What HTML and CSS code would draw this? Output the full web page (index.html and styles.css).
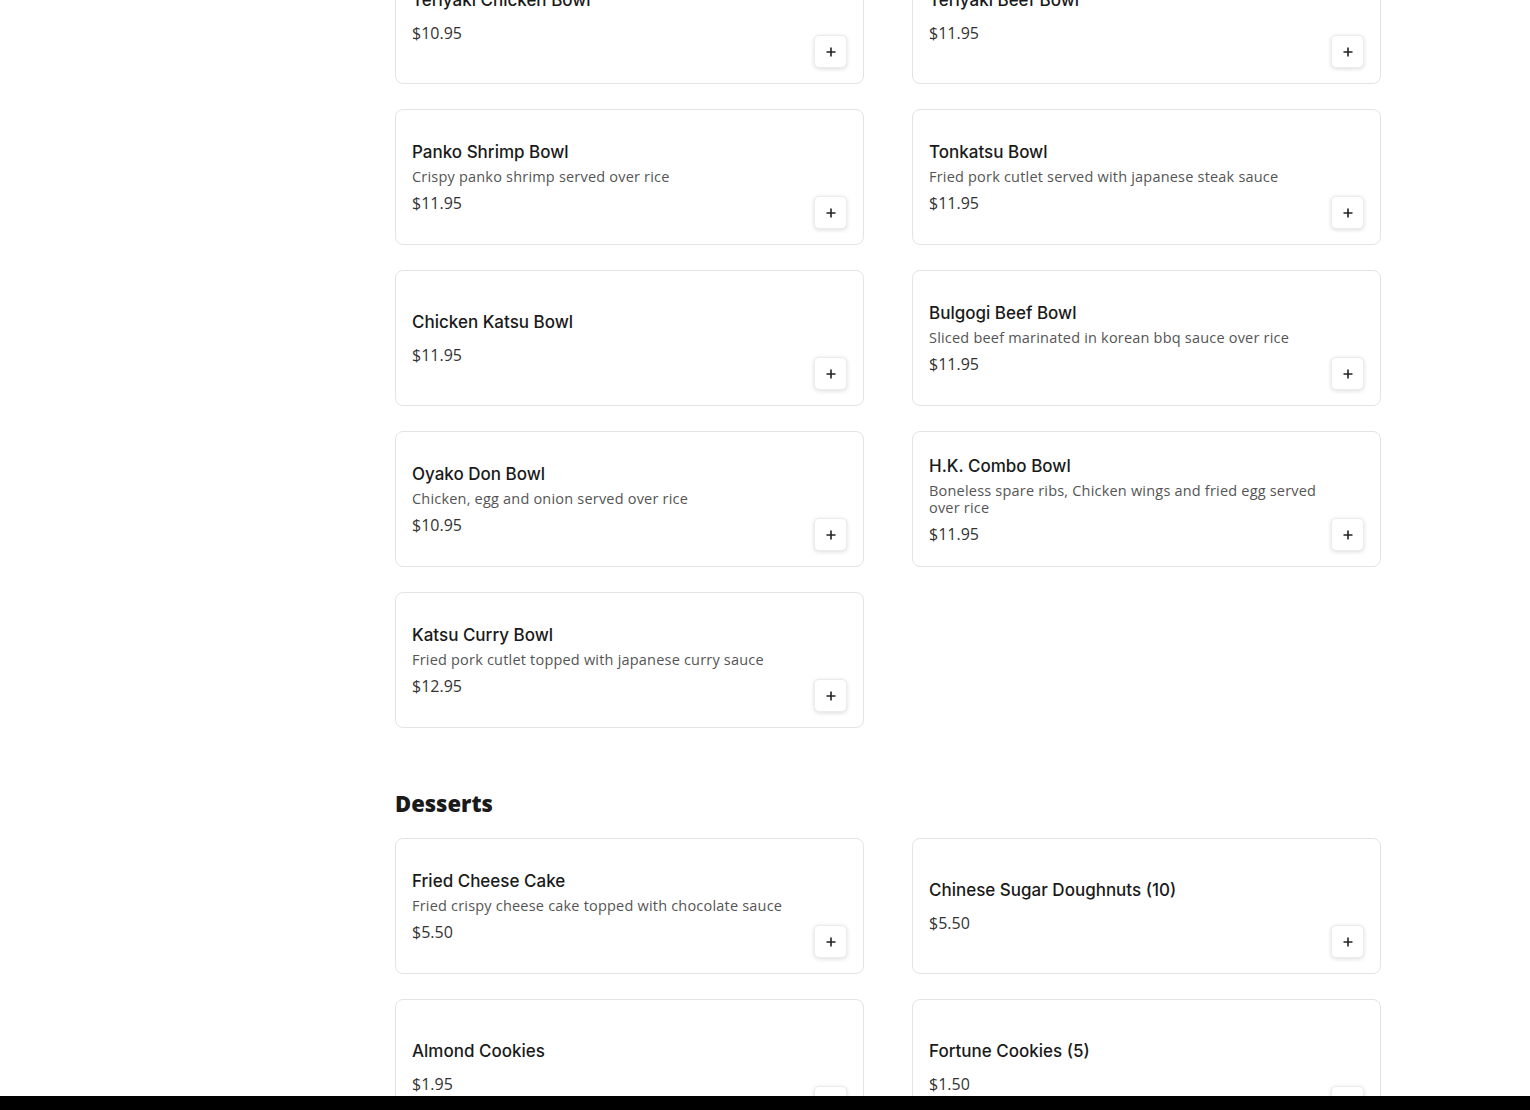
FILE: index.html
```html
<!DOCTYPE html>
<html lang="en">
<head>
<meta charset="utf-8">
<title>Menu</title>
<link rel="stylesheet" href="styles.css">
</head>
<body>
<main class="menu">
  <section class="category">
    <div class="grid">
      <div class="card"><div class="info"><h3 class="name">Teriyaki Chicken Bowl</h3><p class="desc"></p><p class="price">$10.95</p></div><button class="add"><svg viewBox="0 0 12 12" width="12" height="12"><path d="M6 1.5v9M1.5 6h9" stroke="#222" stroke-width="1.6" fill="none"/></svg></button></div>
      <div class="card"><div class="info"><h3 class="name">Teriyaki Beef Bowl</h3><p class="desc"></p><p class="price">$11.95</p></div><button class="add"><svg viewBox="0 0 12 12" width="12" height="12"><path d="M6 1.5v9M1.5 6h9" stroke="#222" stroke-width="1.6" fill="none"/></svg></button></div>
      <div class="card"><div class="info"><h3 class="name">Panko Shrimp Bowl</h3><p class="desc">Crispy panko shrimp served over rice</p><p class="price">$11.95</p></div><button class="add"><svg viewBox="0 0 12 12" width="12" height="12"><path d="M6 1.5v9M1.5 6h9" stroke="#222" stroke-width="1.6" fill="none"/></svg></button></div>
      <div class="card"><div class="info"><h3 class="name">Tonkatsu Bowl</h3><p class="desc">Fried pork cutlet served with japanese steak sauce</p><p class="price">$11.95</p></div><button class="add"><svg viewBox="0 0 12 12" width="12" height="12"><path d="M6 1.5v9M1.5 6h9" stroke="#222" stroke-width="1.6" fill="none"/></svg></button></div>
      <div class="card"><div class="info"><h3 class="name">Chicken Katsu Bowl</h3><p class="desc"></p><p class="price">$11.95</p></div><button class="add"><svg viewBox="0 0 12 12" width="12" height="12"><path d="M6 1.5v9M1.5 6h9" stroke="#222" stroke-width="1.6" fill="none"/></svg></button></div>
      <div class="card"><div class="info"><h3 class="name">Bulgogi Beef Bowl</h3><p class="desc">Sliced beef marinated in korean bbq sauce over rice</p><p class="price">$11.95</p></div><button class="add"><svg viewBox="0 0 12 12" width="12" height="12"><path d="M6 1.5v9M1.5 6h9" stroke="#222" stroke-width="1.6" fill="none"/></svg></button></div>
      <div class="card"><div class="info"><h3 class="name">Oyako Don Bowl</h3><p class="desc">Chicken, egg and onion served over rice</p><p class="price">$10.95</p></div><button class="add"><svg viewBox="0 0 12 12" width="12" height="12"><path d="M6 1.5v9M1.5 6h9" stroke="#222" stroke-width="1.6" fill="none"/></svg></button></div>
      <div class="card"><div class="info"><h3 class="name">H.K. Combo Bowl</h3><p class="desc">Boneless spare ribs, Chicken wings and fried egg served over rice</p><p class="price">$11.95</p></div><button class="add"><svg viewBox="0 0 12 12" width="12" height="12"><path d="M6 1.5v9M1.5 6h9" stroke="#222" stroke-width="1.6" fill="none"/></svg></button></div>
      <div class="card"><div class="info"><h3 class="name">Katsu Curry Bowl</h3><p class="desc">Fried pork cutlet topped with japanese curry sauce</p><p class="price">$12.95</p></div><button class="add"><svg viewBox="0 0 12 12" width="12" height="12"><path d="M6 1.5v9M1.5 6h9" stroke="#222" stroke-width="1.6" fill="none"/></svg></button></div>
    </div>
  </section>
  <section class="category">
    <h2 class="cat-title">Desserts</h2>
    <div class="grid">
      <div class="card"><div class="info"><h3 class="name">Fried Cheese Cake</h3><p class="desc">Fried crispy cheese cake topped with chocolate sauce</p><p class="price">$5.50</p></div><button class="add"><svg viewBox="0 0 12 12" width="12" height="12"><path d="M6 1.5v9M1.5 6h9" stroke="#222" stroke-width="1.6" fill="none"/></svg></button></div>
      <div class="card"><div class="info"><h3 class="name">Chinese Sugar Doughnuts (10)</h3><p class="desc"></p><p class="price">$5.50</p></div><button class="add"><svg viewBox="0 0 12 12" width="12" height="12"><path d="M6 1.5v9M1.5 6h9" stroke="#222" stroke-width="1.6" fill="none"/></svg></button></div>
      <div class="card"><div class="info"><h3 class="name">Almond Cookies</h3><p class="desc"></p><p class="price">$1.95</p></div><button class="add"><svg viewBox="0 0 12 12" width="12" height="12"><path d="M6 1.5v9M1.5 6h9" stroke="#222" stroke-width="1.6" fill="none"/></svg></button></div>
      <div class="card"><div class="info"><h3 class="name">Fortune Cookies (5)</h3><p class="desc"></p><p class="price">$1.50</p></div><button class="add"><svg viewBox="0 0 12 12" width="12" height="12"><path d="M6 1.5v9M1.5 6h9" stroke="#222" stroke-width="1.6" fill="none"/></svg></button></div>
    </div>
  </section>
</main>
<div class="bottom-bar"></div>
</body>
</html>
```
FILE: styles.css
```css
html, body {
  margin: 0;
  padding: 0;
  background: #ffffff;
}
body {
  font-family: "Open Sans", "Liberation Sans", sans-serif;
  color: #1a1a1a;
  overflow: hidden;
  height: 1110px;
}
.menu {
  width: 986px;
  margin-left: 395px;
  margin-top: -52px;
}
.grid {
  display: grid;
  grid-template-columns: 1fr 1fr;
  column-gap: 48px;
  row-gap: 25px;
}
.card {
  box-sizing: border-box;
  height: 136px;
  border: 1px solid #e4e4e4;
  border-radius: 8px;
  padding: 15px 16px;
  display: flex;
  align-items: center;
  background: #fff;
}
.info {
  flex: 1;
  min-width: 0;
  padding-right: 10px;
}
.name {
  margin: 0 0 5px 0;
  font-family: "Inter", "Open Sans", sans-serif;
  font-size: 17px;
  line-height: 22px;
  font-weight: 500;
  color: #1a1a1a;
}
.desc {
  margin: 0 0 8px 0;
  font-size: 14.5px;
  line-height: 17px;
  letter-spacing: 0.2px;
  color: #555;
  max-width: 400px;
}
.desc:empty {
  margin-bottom: 12px;
}
.price {
  margin: 0;
  font-size: 16px;
  line-height: 20px;
  color: #333;
}
.add {
  align-self: flex-end;
  flex: none;
  width: 33px;
  height: 33px;
  padding: 0;
  border: 1px solid #ececec;
  border-radius: 5px;
  background: #fff;
  box-shadow: 0 1px 4px rgba(0, 0, 0, 0.14);
  display: flex;
  align-items: center;
  justify-content: center;
}
.add svg {
  display: block;
}
.cat-title {
  margin: 60px 0 20px 0;
  font-size: 22px;
  line-height: 30px;
  font-weight: 800;
  color: #1a1a1a;
}
.bottom-bar {
  position: fixed;
  left: 0;
  right: 0;
  bottom: 0;
  height: 14px;
  background: #000;
}
```
